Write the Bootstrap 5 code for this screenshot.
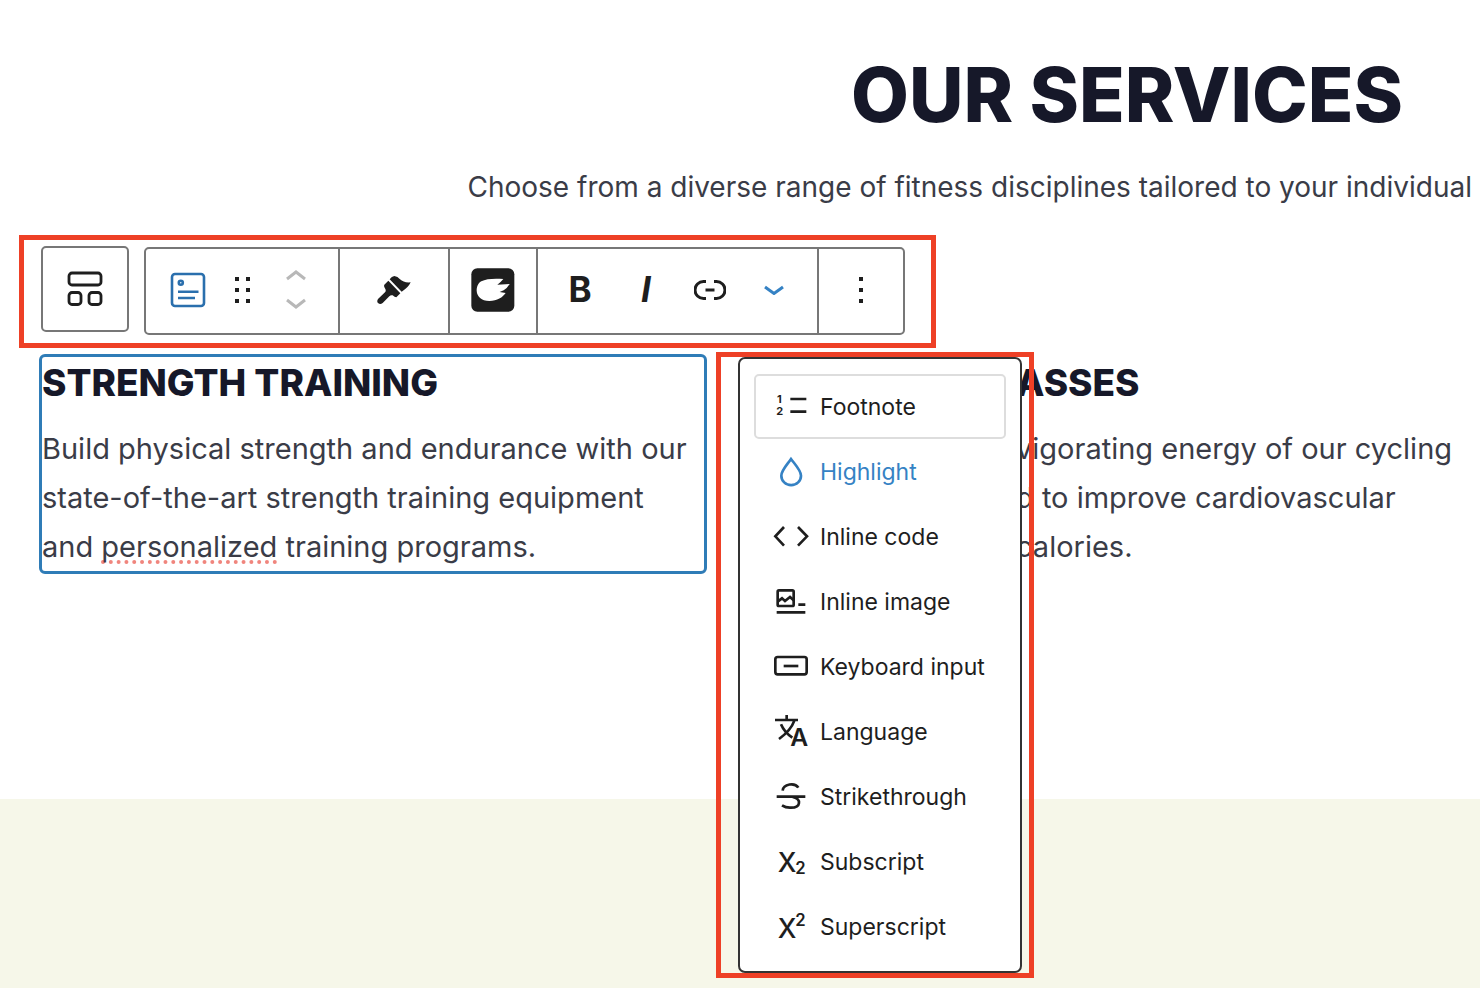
<!DOCTYPE html>
<html lang="en">
<head>
<meta charset="utf-8">
<meta name="viewport" content="width=device-width, initial-scale=1">
<title>Our Services</title>
<link href="https://cdn.jsdelivr.net/npm/bootstrap@5.3.0/dist/css/bootstrap.min.css" rel="stylesheet">
<style>
  body { font-family: Inter, "Liberation Sans", sans-serif; color: #3a3c47; font-size: 29px; line-height: 49px; }
  h1, h2 { color: #161829; font-weight: 800; }
  h1 { font-size: 75px; line-height: 86px; padding: 52px 77px 0 0; }
  h2 { font-size: 37px; line-height: 52px; margin-bottom: 15px; }
  .intro { font-size: 28px; padding: 25px 8px 0 0; margin-bottom: 23px; }
  .services { padding-bottom: 225px; }
  .band { background: #f6f7e9; }
  svg { display: block; fill: none; stroke: #1e1e1e; }
  svg .solid { fill: #1e1e1e; stroke: none; }
  .marker { border: 5px solid #ee4026; }
  .tools { width: fit-content; margin-left: 19px; padding: 6px 26px 8px 17px; z-index: 5; }
  .tool-box { border: 2px solid #777; border-radius: 5px; }
  .tool-box .btn { padding: 0; border: 0; border-radius: 0; height: 82px; color: #1e1e1e; display: flex; align-items: center; justify-content: center; }
  .tool-bar { margin: 1px 0 0 15px; }
  .tool-bar .btn { height: 84px; padding-bottom: 3px; }
  .tool-bar .btn.up { height: 42px; align-items: flex-end; padding-bottom: 10px; }
  .tool-bar .btn.down { height: 42px; align-items: flex-start; padding-top: 7px; }
  .tool-group { display: flex; align-items: center; }
  .tool-group + .tool-group { border-left: 2px solid #777; }
  .tool-group.formats { padding-right: 19px; }
  .w-xs { width: 24px; } .w-sm { width: 48px; } .w-md { width: 80px; } .w-lg { width: 84px; } .w-cover { width: 86px; } .w-xl { width: 108px; }
  .glyph { font-size: 35px; font-weight: 700; }
  .columns { display: grid; grid-template-columns: 668fr 464fr; column-gap: 309px; padding-left: 39px; margin-top: 6px; }
  .selected { border: 3px solid #2f7cb7; border-radius: 6px; }
  .columns > div { height: 220px; white-space: nowrap; }
  .behind { padding-top: 3px; }
  .misspelt { text-decoration: underline dotted #f0857d 4px; text-underline-offset: 3px; text-decoration-skip-ink: none; }
  .more { position: absolute; top: calc(100% + 9px); left: 692px; padding: 0 7px 0 17px; }
  .more-card { border: 2px solid #333; border-radius: 7px; padding: 15px 14px 12px; background: #fff; }
  .more-card .dropdown-item { width: 252px; height: 65px; padding: 0 0 0 18px; font-size: 23px; line-height: 32px; color: #1e1e1e; display: flex; align-items: center; gap: 12px; border: 2px solid transparent; border-radius: 5px; }
  .more-card .dropdown-item.focused { border-color: #ddd; }
  .more-card .dropdown-item.current { color: #3582c4; }
  .more-card svg { width: 34px; height: 34px; flex: none; stroke-width: 8; overflow: visible; }
  .more-card text { fill: #1e1e1e; stroke: none; }
</style>
</head>
<body>
<div class="d-flex flex-column min-vh-100 overflow-hidden">
  <main class="services">
    <header class="d-flex flex-column align-items-end text-nowrap">
      <h1 class="mb-0">OUR SERVICES</h1>
      <p class="intro">Choose from a diverse range of fitness disciplines tailored to your individual</p>
    </header>

    <div class="tools marker position-relative d-flex align-items-start">
      <div class="tool-box">
        <button class="btn w-lg" aria-label="Select parent block">
          <svg width="40" height="40" stroke-width="2.8"><rect x="4" y="4" width="32" height="12" rx="3"/><rect x="4" y="23.5" width="12" height="12" rx="3"/><rect x="24" y="23.5" width="12" height="12" rx="3"/></svg>
        </button>
      </div>
      <div class="tool-box tool-bar d-flex">
        <div class="tool-group">
          <button class="btn w-lg" aria-label="Block type">
            <svg width="40" height="40" style="stroke:#2a6fad" stroke-width="2.6"><rect x="4" y="4" width="32" height="32" rx="3"/><circle cx="12.8" cy="12.8" r="2" stroke-width="2.6"/><path d="M10 21.7h20.5M10 28h17"/></svg>
          </button>
          <button class="btn w-xs" aria-label="Drag">
            <svg width="16" height="26" ><path class="solid" d="M1 0h4v4H1zM12 0h4v4h-4zM1 11h4v4H1zM12 11h4v4h-4zM1 22h4v4H1zM12 22h4v4h-4z"/></svg>
          </button>
          <div class="w-lg">
            <button class="btn up w-lg" aria-label="Move up"><svg width="20" height="12" style="stroke:#b8b8b8" stroke-width="3"><path d="M1 10 10 3l9 7"/></svg></button>
            <button class="btn down w-lg" aria-label="Move down"><svg width="20" height="12" style="stroke:#b8b8b8" stroke-width="3"><path d="M1 2 10 9l9-7"/></svg></button>
          </div>
        </div>
        <div class="tool-group">
          <button class="btn w-xl" aria-label="Copy styles">
            <svg width="34" height="28" viewBox="140 150 102 84"><path class="solid" d="M178 160Q184 151 192 150 202 151 209 160 220 171 241 169 234 185 214 197ZM174 164 210 202 198 214Q193 214 187 208 181 206 177 211L157 231Q150 236 144 232 138 227 143 219L164 199Q169 193 163 185 160 180 162 176Z"/></svg>
          </button>
        </div>
        <div class="tool-group">
          <button class="btn w-cover" aria-label="Cover tools">
            <svg width="44" height="44" viewBox="419 132 132 132"><rect class="solid" x="420" y="133" width="129" height="130" rx="18"/><path fill="#fff" stroke="none" d="M516 165C490 163 464 164 450 172 439 178 436 190 436 200 437 218 450 230 474 231 498 231 514 220 523 207L505 204 517 199Q528 192 535 180L498 182Q508 175 516 165Z"/></svg>
          </button>
        </div>
        <div class="tool-group formats">
          <button class="btn glyph w-lg" aria-label="Bold">B</button>
          <button class="btn glyph fst-italic w-sm" aria-label="Italic">I</button>
          <button class="btn w-md" aria-label="Link">
            <svg width="32" height="20" stroke-width="3"><path d="M12 1.500H9.500a8.500 8.500 0 0 0 0 17H12M20 1.500h2.500a8.500 8.500 0 0 1 0 17H20M11.500 10h9"/></svg>
          </button>
          <button class="btn w-sm" aria-label="More formatting" aria-expanded="true">
            <svg width="20" height="10" style="stroke:#3582c4" stroke-width="3"><path d="M1 2 10 8.500 19 2"/></svg>
          </button>
        </div>
        <div class="tool-group">
          <button class="btn w-lg" aria-label="Options">
            <svg width="4" height="26"><path class="solid" d="M0 0h4v4H0zM0 11h4v4H0zM0 22h4v4H0z"/></svg>
          </button>
        </div>
      </div>

      <div class="more marker">
        <div class="more-card">
          <button class="dropdown-item focused"><svg viewBox="207 135 102 102"><text x="216" y="173" font-size="33" font-weight="700">1</text><text x="214" y="210" font-size="33" font-weight="700">2</text><path d="M256 162h48M256 200h48"/></svg>Footnote</button>
          <button class="dropdown-item current"><svg viewBox="207 330 102 102" style="stroke:#3582c4"><path d="M258 342C248 357 229 376 229 392a29 28 0 0 0 59 0C288 376 269 357 258 342Z"/></svg>Highlight</button>
          <button class="dropdown-item"><svg viewBox="207 525 102 102"><path d="M237 546 211 574l26 28M279 546l27 28-27 28"/></svg>Inline code</button>
          <button class="dropdown-item"><svg viewBox="207 43 102 102"><rect x="218" y="59" width="48" height="47" rx="4"/><path d="M219 92 231 83 240 91 255 79 266 89M280 102h21M215 125h86"/></svg>Inline image</button>
          <button class="dropdown-item"><svg viewBox="207 237 102 102"><rect x="211" y="258" width="94" height="52" rx="7"/><path d="M236 285h44"/></svg>Keyboard input</button>
          <button class="dropdown-item"><svg viewBox="207 432 102 102"><path d="M210 447h69M245 432v15M268 449Q258 478 222 504M228 460Q238 484 262 500"/><text x="256" y="526" font-size="74" font-weight="600">A</text></svg>Language</button>
          <button class="dropdown-item"><svg viewBox="207 27 102 102"><path d="M233 59C235 38 270 34 280 50M215 77h86M263 78C290 84 288 110 258 110Q243 111 231 103"/></svg>Strikethrough</button>
          <button class="dropdown-item"><svg viewBox="207 222 102 102"><text x="218" y="303" font-size="80" font-weight="500">X</text><text x="271" y="310" font-size="50" font-weight="600">2</text></svg>Subscript</button>
          <button class="dropdown-item"><svg viewBox="207 415 102 102"><text x="218" y="498" font-size="80" font-weight="500">X</text><text x="271" y="462" font-size="50" font-weight="600">2</text></svg>Superscript</button>
        </div>
      </div>
    </div>

    <div class="columns">
      <div class="selected">
        <h2>STRENGTH TRAINING</h2>
        <p class="mb-0">Build physical strength and endurance with our<br>state-of-the-art strength training equipment<br>and <span class="misspelt">personalized</span> training programs.</p>
      </div>
      <div class="behind">
        <h2>ASSES</h2>
        <p class="mb-0">vigorating energy of our cycling<br>d to improve cardiovascular<br>calories.</p>
      </div>
    </div>
  </main>
  <section class="band flex-grow-1"></section>
</div>
<script src="https://cdn.jsdelivr.net/npm/bootstrap@5.3.0/dist/js/bootstrap.bundle.min.js"></script>
</body>
</html>
